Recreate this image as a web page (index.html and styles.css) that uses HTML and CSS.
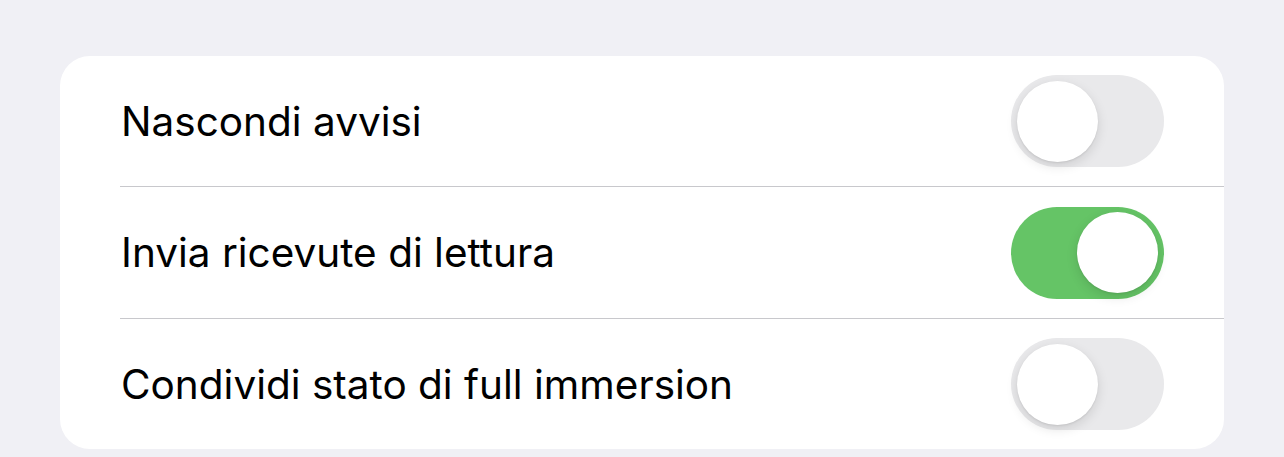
FILE: index.html
```html
<!DOCTYPE html>
<html>
<head>
<meta charset="utf-8" />
<title>Impostazioni</title>
<link rel="stylesheet" href="styles.css">
</head>
<body>
<div class="group">
    <div class="row">
        <span class="label">Nascondi avvisi</span>
        <span class="toggle"><span class="knob"></span></span>
    </div>
    <div class="row">
        <span class="label">Invia ricevute di lettura</span>
        <span class="toggle on"><span class="knob"></span></span>
    </div>
    <div class="row">
        <span class="label">Condividi stato di full immersion</span>
        <span class="toggle"><span class="knob"></span></span>
    </div>
</div>
</body>
</html>
```

FILE: styles.css
```css
*{ padding:0; margin:0; box-sizing:border-box; }
body{
    background-color:#f0f0f5;
    font-family:Inter, "Liberation Sans", sans-serif;
    padding:56px 60px 0 60px;
}
.group{
    background:#fff;
    border-radius:30px;
    padding-left:60px;
    overflow:hidden;
}
.row{
    height:131px;
    display:flex;
    align-items:center;
    justify-content:space-between;
    padding-right:60px;
    border-bottom:1px solid #c8c8cc;
}
.row:nth-child(2){
    height:132px;
}
.row:last-child{
    border-bottom:0;
    height:130px;
}
.label{
    font-size:40.5px;
    color:#000;
    padding-left:1px;
}
.toggle{
    width:153px;
    height:92px;
    border-radius:46px;
    background:#e9e9eb;
    display:flex;
    align-items:center;
    padding:0 6px;
}
.toggle.on{
    background:#65c466;
    justify-content:flex-end;
}
.knob{
    width:81px;
    height:81px;
    border-radius:50%;
    background:#fff;
    box-shadow:0 4px 12px rgba(0,0,0,0.12), 0 1px 2px rgba(0,0,0,0.08);
}
```
